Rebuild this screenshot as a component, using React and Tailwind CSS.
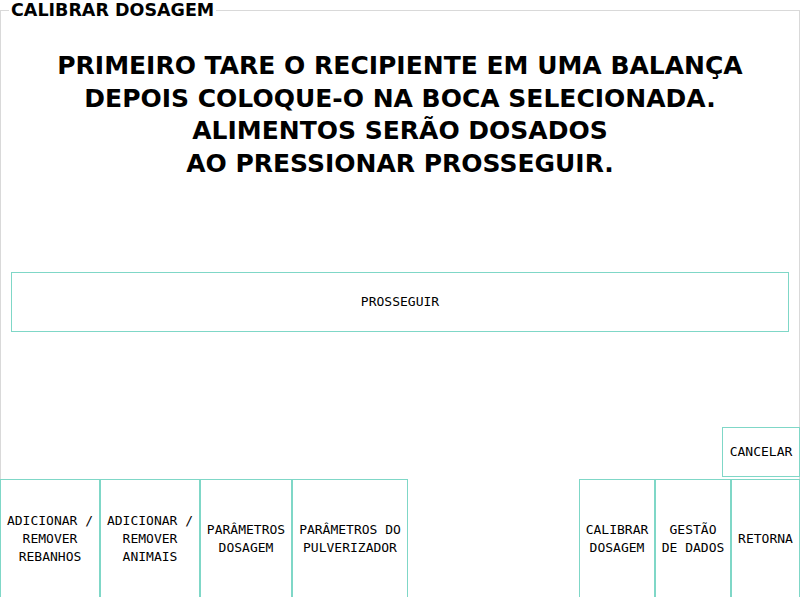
import React from "react";

const mono = { fontFamily: '"DejaVu Sans Mono", "Liberation Mono", monospace' };

function Btn({ w, children }) {
  return (
    <button
      className="h-[120px] shrink-0 border border-[#7fd7c7] bg-white text-[13px] leading-[18px] text-black flex items-center justify-center text-center"
      style={{ ...mono, width: w }}
    >
      <span>{children}</span>
    </button>
  );
}

export default function App() {
  return (
    <div className="w-[800px] h-[597px] overflow-hidden bg-white">
      <fieldset
        className="w-[800px] h-[640px] border border-[#d9d9d9] flex flex-col"
        style={{ fontFamily: '"DejaVu Sans", Verdana, sans-serif' }}
      >
        <legend className="ml-[8px] px-[2px] text-[17.5px] leading-[21px] font-bold text-black">
          CALIBRAR DOSAGEM
        </legend>
        <div className="mt-[29px] text-center text-[25px] leading-[32.5px] font-bold text-black">
          PRIMEIRO TARE O RECIPIENTE EM UMA BALANÇA
          <br />
          DEPOIS COLOQUE-O NA BOCA SELECIONADA.
          <br />
          ALIMENTOS SERÃO DOSADOS
          <br />
          AO PRESSIONAR PROSSEGUIR.
        </div>
        <button
          className="mt-[92px] mx-[10px] h-[60px] border border-[#7fd7c7] bg-white text-[13px] text-black flex items-center justify-center"
          style={mono}
        >
          PROSSEGUIR
        </button>
        <div className="mt-[95px] -mr-px flex justify-end">
          <button
            className="w-[78px] h-[50px] border border-[#7fd7c7] bg-white text-[13px] text-black flex items-center justify-center"
            style={mono}
          >
            CANCELAR
          </button>
        </div>
        <div className="mt-[2px] -mx-px flex">
          <Btn w={100}>
            ADICIONAR /<br />REMOVER<br />REBANHOS
          </Btn>
          <Btn w={100}>
            ADICIONAR /<br />REMOVER<br />ANIMAIS
          </Btn>
          <Btn w={92}>
            PARÂMETROS<br />DOSAGEM
          </Btn>
          <Btn w={116}>
            PARÂMETROS DO<br />PULVERIZADOR
          </Btn>
          <div className="flex-1" />
          <Btn w={76}>
            CALIBRAR<br />DOSAGEM
          </Btn>
          <Btn w={76}>
            GESTÃO<br />DE DADOS
          </Btn>
          <Btn w={69}>RETORNA</Btn>
        </div>
      </fieldset>
    </div>
  );
}
